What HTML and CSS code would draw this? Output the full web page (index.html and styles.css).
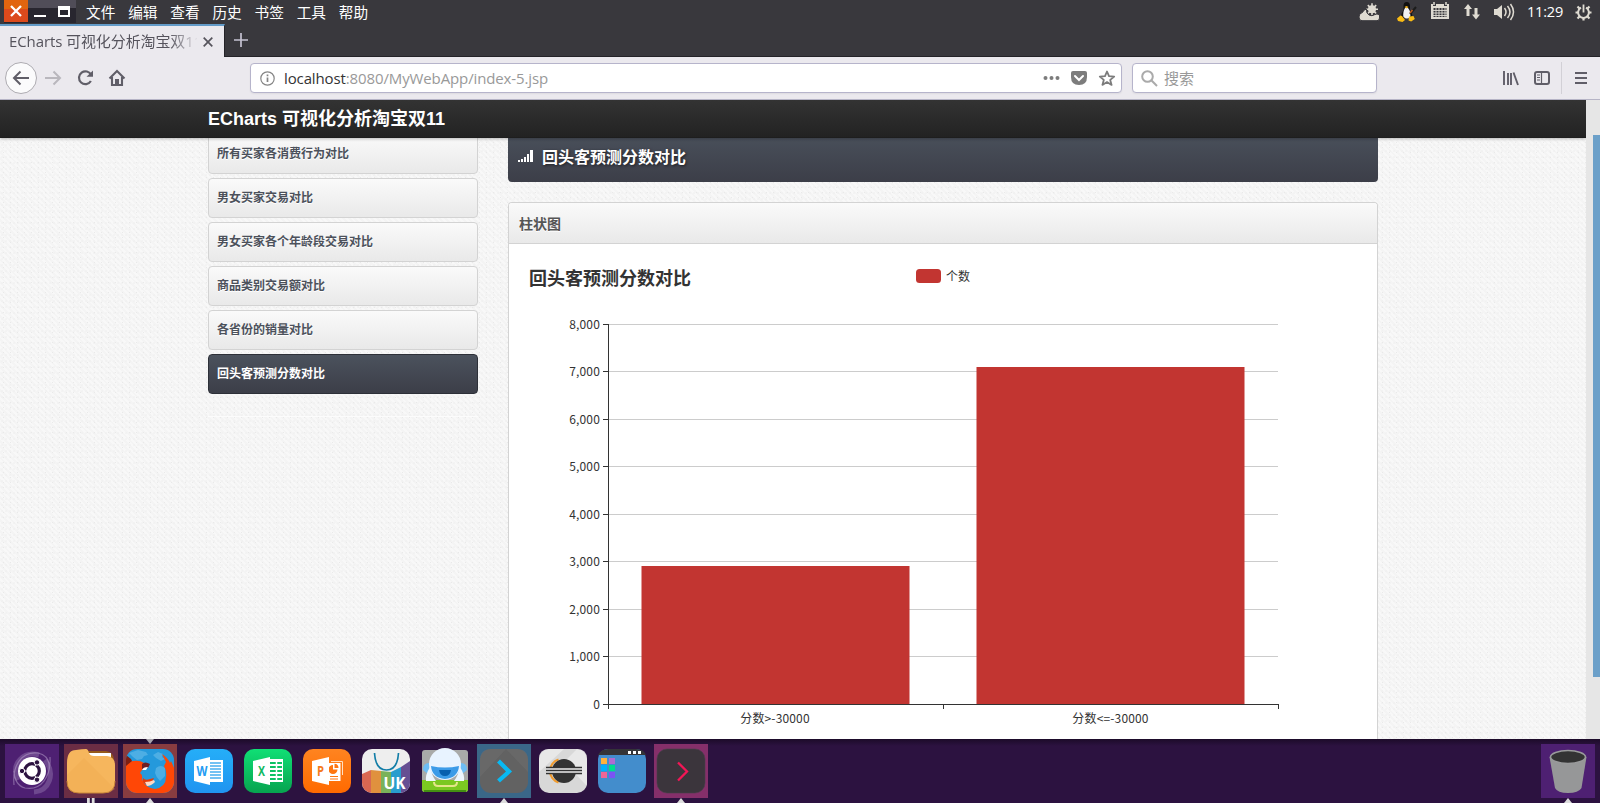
FILE: index.html
```html
<!DOCTYPE html>
<html lang="zh-CN">
<head>
<meta charset="utf-8">
<title>ECharts 可视化分析淘宝双11</title>
<link rel="stylesheet" href="styles.css">
</head>
<body>
<header class="menubar">
  <svg class="winbtns" width="72" height="23" viewBox="0 0 72 23"><rect width="72" height="23" fill="#28262f"/><path d="M24 0h48v8H24z" fill="#504d58"/><path d="M0 0h24v22H0z" fill="#dc4a1c"/><path d="M0 0h24v9H0z" fill="#e1650f"/><path d="M7 6l10 10M17 6L7 16" stroke="#fff" stroke-width="2.3"/><path d="M30 15h12v2H30z" fill="#fff"/><path d="M54 6h12v11H54zM56 10v5h8v-5z" fill="#fff" fill-rule="evenodd"/></svg>
  <nav class="menus"><span>文件</span><span>编辑</span><span>查看</span><span>历史</span><span>书签</span><span>工具</span><span>帮助</span></nav>
  <div class="tray">
    <svg class="t-weather" width="21" height="18" viewBox="0 0 21 18" fill="#dfdbd2"><circle cx="13" cy="6.300" r="4"/><path d="M13 .3v12M7 6.300h12M8.800 2.100l8.400 8.400M17.200 2.100l-8.400 8.400" stroke="#dfdbd2" stroke-width="1.600"/><path d="M0 14q0-4 3.500-4.500 1-3 4-3.500-.4 4.500 2.500 6 3 1.500 5.500-.3 2.500-1.700 5 .3v3q0 2.700-2.500 2.700H3Q0 17.700 0 14z" stroke="#39383d" stroke-width="1"/></svg>
    <svg class="t-tux" width="20" height="20" viewBox="0 0 20 20"><path d="M4 16q0-5 2.500-8V4q0-4 3.200-4T13 4v4q3 4 2 8z" fill="#111"/><path d="M6.500 15Q5.500 10 8 6h3q3.500 4 2 9-3 3-6.500 0z" fill="#f2f2f2"/><path d="M7.500 5l2-1 2 1-2 1.600z" fill="#f3b21c"/><path d="M0 16.500l3.500-3 1.500.5 3 4-2.500 2L1 19zM11.500 18.500l.5-4 4.500-.5 1.300 3-3.600 2.500z" fill="#fbbc14"/><path d="M13 12l6-7" stroke="#1c1c1c" stroke-width="2"/><path d="M13 11l2.500-3" stroke="#c45c1c" stroke-width="1.500"/></svg>
    <svg class="t-cal" width="18" height="18" viewBox="0 0 18 18"><path d="M0 2h2v2h3V2h8v2h3V2h2v15H0z" fill="#dfdbd2"/><path d="M3 0v3M15 0v3" stroke="#dfdbd2" stroke-width="1.500"/><path d="M2.500 6h13v9h-13z" fill="#39383d"/><path d="M2 8.500h14M2 11h14M2 13.500h14M5 6v9M8 6v9M11 6v9M14 6v9" stroke="#dfdbd2" stroke-width=".9"/></svg>
    <svg class="t-net" width="16" height="16" viewBox="0 0 16 16" fill="#dfdbd2"><path d="M4 0l4 5H5.500v7h-3V5H0zM12 15.500l-4-5h2.500V4h3v6.500H16z"/></svg>
    <svg class="t-vol" width="21" height="18" viewBox="0 0 21 18" fill="none" stroke="#dfdbd2" stroke-width="1.500"><path d="M0 6h3l5-4v14l-5-4H0z" fill="#dfdbd2" stroke="none"/><path d="M10.500 5q3 4 0 8M13.500 3q5 6 0 12M16.500 1q6 8 0 16"/></svg>
    <span class="clock">11:29</span>
    <svg class="t-gear" width="17" height="17" viewBox="0 0 17 17" fill="none" stroke="#dfdbd2"><path d="M11 3.700a5.400 5.400 0 1 1-5 0" stroke-width="2"/><path d="M8.500 .5v8" stroke-width="1.800"/><path d="M2.500 2.500l2 2M14.500 2.500l-2 2M.5 8.500h3M13.500 8.500h3M2.500 14.500l2-2M14.500 14.500l-2-2M8.500 13.500v3" stroke-width="2.200"/></svg>
  </div>
</header>
<div class="tabstrip">
  <div class="tab"><span class="tab-title">ECharts 可视化分析淘宝双11</span><svg width="10" height="10" viewBox="0 0 10 10"><path d="M.7.7l8.600 8.600M9.300.7L.7 9.300" stroke="#56545c" stroke-width="1.700"/></svg></div>
  <svg class="newtab" width="14" height="14" viewBox="0 0 14 14"><path d="M7 0v14M0 7h14" stroke="#c5c2d2" stroke-width="1.700"/></svg>
</div>
<div class="toolbar">
  <svg class="nav" width="130" height="42" viewBox="0 0 130 42" fill="none" stroke="#605e68" stroke-width="2"><circle cx="21" cy="21" r="15.500" fill="#fbfbfc" stroke="#adabb1" stroke-width="1"/><path d="M29 21H14M20.500 14.500L14 21l6.500 6.500"/><path d="M45 21h15M53.500 14.500L60 21l-6.500 6.500" stroke="#b9b7bd"/><path d="M91.200 18a6.400 6.400 0 1 0-.3 6" stroke-width="2.200"/><path d="M93 13.500v6.200h-6.500z" fill="#605e68" stroke="none"/><path d="M109.500 21.500L117 14l7.500 7.500M112 20v8h10v-8" stroke-width="2.100"/><path d="M115 22h4v6h-4z" fill="#605e68" stroke="none"/></svg>
  <div class="urlbox">
    <svg width="15" height="15" viewBox="0 0 15 15" fill="none" stroke="#858585"><circle cx="7.500" cy="7.500" r="6.700" stroke-width="1.200"/><path d="M7.500 6.500V11M7.500 3.500v1.700" stroke-width="1.700"/></svg>
    <span class="url">localhost<span class="dim">:8080/MyWebApp/index-5.jsp</span></span>
    <svg class="urlacts" width="74" height="18" viewBox="0 0 74 18" fill="#7c7c7c"><circle cx="2.500" cy="9" r="2"/><circle cx="8.500" cy="9" r="2"/><circle cx="14.500" cy="9" r="2"/><path d="M30 2h12q2 0 2 2v4q0 8-8 8t-8-8V4q0-2 2-2z"/><path d="M32 7l4 4 4-4" fill="none" stroke="#fff" stroke-width="2" stroke-linecap="round"/><path d="M64 2.500l2 4.700 5.200.4-4 3.300 1.400 5-4.600-2.800-4.600 2.800 1.400-5-4-3.300 5.200-.4z" fill="none" stroke="#7c7c7c" stroke-width="1.800" stroke-linejoin="round"/></svg>
  </div>
  <div class="searchbox">
    <svg width="17" height="17" viewBox="0 0 17 17" fill="none" stroke="#aaa" stroke-width="2"><circle cx="6.500" cy="6.500" r="5.300"/><path d="M10.300 10.300l5.700 5.700"/></svg>
    <span class="hint">搜索</span>
  </div>
  <svg class="rtools" width="98" height="42" viewBox="0 0 98 42" fill="none" stroke="#605e68" stroke-width="2"><path d="M4 14v14M8 16v12M11 16v12M13.500 15.500L18 28" stroke-width="1.900"/><rect x="35" y="15" width="14" height="12" rx="2"/><path d="M41.500 15v12" stroke-width="1.200"/><path d="M37 18h3M37 20.500h3M37 23h3" stroke-width="1"/><path d="M61.500 5v32" stroke="#d2d0d6" stroke-width="1"/><path d="M75 16h12M75 21h12M75 26h12"/></svg>
</div>
<main class="viewport">
  <div class="page">
    <div class="navbar"><span class="brand">ECharts 可视化分析淘宝双11</span></div>
    <div class="container">
      <aside class="sidebar">
        <ul class="mainnav">
          <li>所有买家各消费行为对比</li>
          <li>男女买家交易对比</li>
          <li>男女买家各个年龄段交易对比</li>
          <li>商品类别交易额对比</li>
          <li>各省份的销量对比</li>
          <li class="active">回头客预测分数对比</li>
        </ul>
        <div class="rule"></div>
      </aside>
      <section class="content">
        <h1 class="page-title"><svg width="15" height="13" viewBox="0 0 15 13" fill="#fff"><path d="M0 10h2v2H0zM3 9h2v3H3zM6 7h2v5H6zM9 4h2v8H9zM12 0h3v12h-3z"/></svg>回头客预测分数对比</h1>
        <div class="widget">
          <h3>柱状图</h3>
          <svg class="chart" width="868" height="495" viewBox="509 244 868 495">
            <text x="529" y="285" class="c-title">回头客预测分数对比</text>
            <rect x="916" y="269" width="25" height="14" rx="3.500" fill="#c23531"/>
            <text x="946" y="281">个数</text>
            <path d="M609 324.500h669M609 371.500h669M609 419.500h669M609 466.500h669M609 514.500h669M609 561.500h669M609 609.500h669M609 656.500h669" stroke="#ccc"/>
            <path d="M641.500 566h268v138h-268zM976.500 367h268v337h-268z" fill="#c23531"/>
            <path d="M608.500 324v385M603 704.500h676M943.500 704v5M1278.500 704v5M603 324.500h5M603 371.500h5M603 419.500h5M603 466.500h5M603 514.500h5M603 561.500h5M603 609.500h5M603 656.500h5" stroke="#333"/>
            <g text-anchor="end" class="num"><text x="600" y="329">8,000</text><text x="600" y="376">7,000</text><text x="600" y="424">6,000</text><text x="600" y="471">5,000</text><text x="600" y="519">4,000</text><text x="600" y="566">3,000</text><text x="600" y="614">2,000</text><text x="600" y="661">1,000</text><text x="600" y="709">0</text></g>
            <g text-anchor="middle" class="num"><text x="775" y="723">分数&gt;-30000</text><text x="1110.500" y="723">分数&lt;=-30000</text></g>
          </svg>
        </div>
      </section>
    </div>
  </div>
  <div class="scrollbar"><div class="thumb"></div></div>
</main>
<footer class="dock">
  <div class="cell c-dash"><svg viewBox="0 0 54 54"><g fill="none" stroke="#bba5d0"><path d="M13 36C5 19 19 7 34 11M40 16c11 14 4 31-11 32" stroke-width="5" opacity=".3"/><path d="M9 41C7 20 18 7 33 9c9 2 12 9 11 17M45 13c1 20-9 34-25 31-8-2-11-10-11-17" stroke-width="1.200" opacity=".5"/></g><circle cx="27" cy="27" r="14" fill="#fff"/><circle cx="27" cy="27" r="7.300" fill="none" stroke="#2c1240" stroke-width="3.200"/><path d="M27 27L16 27M27 27l6-10M27 27l6 10" stroke="#fff" stroke-width="1"/><g fill="#2c1240" stroke="#fff"><circle cx="17" cy="27" r="2.700"/><circle cx="32" cy="18.400" r="2.700"/><circle cx="32" cy="35.700" r="2.700"/></g></svg></div>
  <div class="cell c-files"><svg viewBox="0 0 54 54"><path d="M22 7h20q8 1 8 10H22z" fill="#96591a"/><path d="M24 9h23v5H24z" fill="#fff"/><path d="M3 19Q3 6 12 6q6-1 10-1 2 0 3 4 1 3 5 3h13q8 1 8 9v16q0 12-12 12H15Q3 49 3 37z" fill="#f6b65d"/><path d="M3 31L20 14l31 31-6 4H15Q3 49 3 37z" fill="#efa94d" opacity=".35"/><path d="M3 37q0 12 12 12h24q12 0 12-12" fill="none" stroke="#c98639"/></svg><i class="pip two"></i></div>
  <div class="cell c-fox"><i class="tip"></i><svg viewBox="0 0 54 54"><defs><clipPath id="fx"><rect x="3" y="5" width="48" height="44" rx="11"/></clipPath></defs><g clip-path="url(#fx)"><path d="M0 0h54v54H0z" fill="#2499dc"/><path d="M6 9l9-3 8 2 2 3-4 1-2 3-5 1-4-3zM30 11l5-3 5 2-1 3 3 2-4 2-5-3zM33 24q5-4 9 0v8l-5 5q-4-4-5-8z" fill="#6fbfeb" opacity=".55"/><path d="M0 22Q4 17 10 17q7-1 11 2l-2 7-2 3q3 2 2 6 3 9 13 10 11-2 11-12 1-6-2-11l2-4-4-8q6 4 8 9l1-2 4 9v28H0z" fill="#ff4706"/><path d="M3 11l5 4 1 2-6 5z" fill="#7c1f13"/><path d="M19 20q3-3 8 0l-2 4-6 2z" fill="#6e1f23"/><path d="M19 26q1-3 6-3l-2 3z" fill="#fff"/><path d="M20 34q2 3 7 1l4-1-3 6q-5 2-8-2z" fill="#e83a06"/><path d="M22 38q5 0 9-2l1 2q-4 4-8 4z" fill="#ffd9c4"/></g></svg><i class="pip"></i></div>
  <div class="cell"><svg viewBox="0 0 54 54"><defs><linearGradient id="gw" x2="0" y2="1"><stop stop-color="#25aef8"/><stop offset="1" stop-color="#2094f0"/></linearGradient></defs><rect x="3" y="5" width="48" height="44" rx="10" fill="url(#gw)"/><path d="M28 16h13v22H28z" fill="#fff"/><path d="M28 19h11M28 22h11M28 25h11M28 28h11M28 31h11M28 34h11" stroke="#46aef0" stroke-width="1.300"/><path d="M12 17l16-4v28l-16-4z" fill="#fff"/><text x="20" y="32" class="g" textLength="11" lengthAdjust="spacingAndGlyphs" fill="#229cf3">W</text></svg></div>
  <div class="cell"><svg viewBox="0 0 54 54"><defs><linearGradient id="ge" x2="0" y2="1"><stop stop-color="#10df75"/><stop offset="1" stop-color="#07a34f"/></linearGradient></defs><rect x="3" y="5" width="48" height="44" rx="10" fill="url(#ge)"/><path d="M28 15h14v23H28z" fill="#fff"/><path d="M28 19h13M28 23h13M28 27h13M28 31h13M28 35h13" stroke="#0bc263" stroke-width="2"/><path d="M35.500 16v21" stroke="#fff" stroke-width="1.500"/><path d="M12 17l17-4v28l-17-4z" fill="#fff"/><text x="20.500" y="32" class="g" textLength="7" lengthAdjust="spacingAndGlyphs" fill="#10b960">X</text></svg></div>
  <div class="cell"><svg viewBox="0 0 54 54"><defs><linearGradient id="gp" x2="0" y2="1"><stop stop-color="#ff8420"/><stop offset="1" stop-color="#ff6a00"/></linearGradient></defs><rect x="3" y="5" width="48" height="44" rx="10" fill="url(#gp)"/><path d="M31 17.500h11.500V31" fill="none" stroke="#ffe0c5"/><path d="M28 19h12.500v18H28z" fill="#fff"/><path d="M33 21a4.500 4.500 0 1 0 4.500 4.500H33z" fill="#ff7610"/><path d="M34.500 19.800v4.200h4a4.200 4.200 0 0 0-4-4.200z" fill="#ff7610"/><path d="M30 32.500h8M30 35h8" stroke="#ff7610"/><path d="M12 17l17-4v28l-17-4z" fill="#fff"/><text x="20.500" y="32" class="g" textLength="7" lengthAdjust="spacingAndGlyphs" fill="#f57a1c">P</text></svg></div>
  <div class="cell"><svg viewBox="0 0 54 54"><defs><clipPath id="uk"><rect x="3" y="5" width="48" height="44" rx="10"/></clipPath></defs><g clip-path="url(#uk)"><path d="M0 0h54v54H0z" fill="#eee"/><path d="M3 30l9-4v24H3z" fill="#d96752"/><path d="M12 26l10 1v23H12z" fill="#e0913e"/><path d="M22 27l10 1v22H22z" fill="#79b25a"/><path d="M32 28l10-5v27H32z" fill="#289dcd"/><path d="M42 23l9-6v33h-9z" fill="#664f93"/></g><path d="M15.500 9q1 17 12 17t12-17" fill="none" stroke="#127da7" stroke-width="1.700"/><text x="35.500" y="45" class="uk">UK</text></svg></div>
  <div class="cell"><svg viewBox="0 0 54 54"><rect x="4" y="6" width="46" height="42" rx="3" fill="#a9aaa9"/><path d="M4 36h46v9q0 3-3 3H7q-3 0-3-3z" fill="#7bc821"/><path d="M6 46h42v2H6z" fill="#439012"/><path d="M5 26q0-7 6-7h32q6 0 6 7l-5 4H10z" fill="#6dbdf5"/><circle cx="27" cy="20" r="16" fill="#e8f3ff"/><path d="M13 22q14 3 28 0-1 12-14 13-13-1-14-13z" fill="#3c9be8"/><path d="M21 26h12q-1 6-6 6t-6-6z" fill="#075fae"/><path d="M12 23q-5 8-4 14h10q-4-5-6-14zM42 23q5 8 4 14H36q4-5 6-14z" fill="#eef6ff"/><path d="M16 38q0 4 4 4h15q4 0 4-4" fill="none" stroke="#e5e58a" stroke-width="2"/></svg></div>
  <div class="cell c-teal"><svg viewBox="0 0 54 54"><rect x="3" y="5" width="48" height="44" rx="11" fill="#626262"/><path d="M3 33L29 5h-15Q3 5 3 16zM29 5l22 23V16Q51 5 40 5z" fill="#737373" opacity=".4"/><path d="M21.500 17L32 27.500 21.500 37" fill="none" stroke="#08b9f3" stroke-width="4.200"/></svg><i class="pip"></i></div>
  <div class="cell"><svg viewBox="0 0 54 54"><rect x="3" y="5" width="48" height="44" rx="10" fill="#d8d8d8"/><path d="M3 28V15Q3 5 13 5h15zM51 42L28 18 41 5q10 0 10 10z" fill="#eee" opacity=".75"/><path d="M22.500 15.500a12 12 0 0 0 0 23" fill="none" stroke="#f19b2c" stroke-width="2"/><circle cx="28" cy="27" r="12" fill="#333"/><path d="M10 23h36v7H10z" fill="#eee"/><path d="M10 23.500h36M10 26.500h36M10 29.500h36" stroke="#333" stroke-width="1.300"/></svg></div>
  <div class="cell"><svg viewBox="0 0 54 54"><rect x="3" y="5" width="48" height="44" rx="10" fill="#438dcc"/><path d="M3 11q3-6 10-6h28q8 0 10 6z" fill="#343437"/><path d="M33 7h3v3h-3zM38 7h3v3h-3zM43 7h3v3h-3z" fill="#fff"/><path d="M6 14h6v6H6z" fill="#ffb23e"/><path d="M14 14h6v6h-6z" fill="#b06bd1"/><path d="M6 21h6v6H6z" fill="#00b0ff"/><path d="M14 21h6v6h-6z" fill="#00df8c"/><path d="M6 28h6v6H6z" fill="#f06596"/><path d="M14 28h6v6h-6z" fill="#7b54f4"/></svg></div>
  <div class="cell c-pink"><svg viewBox="0 0 54 54"><rect x="3" y="5" width="48" height="44" rx="10" fill="#3b353c" stroke="#48404b" stroke-width=".6"/><path d="M24 18.500l9 9-9 9" fill="none" stroke="#f31656" stroke-width="2.300"/></svg><i class="pip"></i></div>
  <div class="cell c-trash"><svg viewBox="0 0 54 54"><path d="M8.500 13h37L40.500 44q-3 5-13.500 5t-13-5z" fill="#969798"/><ellipse cx="27" cy="13" rx="17.500" ry="6.500" fill="#333" stroke="#999a9b" stroke-width="1.600"/></svg><i class="pip"></i></div>
</footer>
</body>
</html>
```
FILE: styles.css
```css
* { box-sizing: border-box; }
body { margin: 0; width: 1600px; height: 803px; overflow: hidden; display: flex; flex-direction: column; font-family: "Open Sans", "Noto Sans CJK SC", sans-serif; background: #39383d; }
svg { display: block; flex: none; }
.menubar { height: 24px; display: flex; align-items: flex-start; padding-left: 4px; color: #fff; font-size: 14.67px; line-height: 24px; }
.menus { display: flex; gap: 12.8px; margin-left: 10px; }
.tray { margin-left: auto; display: flex; align-items: center; height: 24px; padding-right: 8px; }
.t-tux { margin-left: 17px; }
.t-cal { margin-left: 14px; margin-top: -2px; }
.t-net { margin-left: 15px; }
.t-vol { margin-left: 14px; }
.clock { width: 37px; margin-left: 12px; font-size: 14.5px; letter-spacing: -.2px; white-space: nowrap; }
.t-gear { margin-left: 11px; }
.tabstrip { height: 33px; display: flex; align-items: center; border-bottom: 1px solid #242328; }
.tab { width: 225px; height: 33px; margin-bottom: -1px; background: #ebe9ee; border-top: 2px solid #639bc8; border-right: 1px solid #242328; padding: 1px 0 0 9px; display: flex; align-items: center; position: relative; z-index: 1; }
.tab-title { width: 188px; margin: -3px 6px 0 0; overflow: hidden; white-space: nowrap; font-size: 15px; letter-spacing: -.1px; line-height: 24px; color: #55535c; -webkit-mask-image: linear-gradient(90deg, #000 160px, transparent 190px); mask-image: linear-gradient(90deg, #000 160px, transparent 190px); }
.newtab { margin-left: 9px; }
.toolbar { height: 43px; background: #ebe9ee; border-bottom: 1px solid #b6b4c6; display: flex; align-items: center; }
.urlbox, .searchbox { height: 30px; border: 1px solid #b6b4cb; border-radius: 4px; background: #fff; display: flex; align-items: center; font-size: 15px; box-shadow: 0 1px 2px rgba(0,0,0,.06); }
.urlbox { width: 872px; margin-left: 120px; padding: 0 4px 0 9px; }
.url { margin-left: 9px; color: #333; white-space: nowrap; letter-spacing: -.12px; }
.dim { color: #999; }
.urlacts { margin-left: auto; }
.searchbox { width: 245px; margin-left: 10px; padding-left: 8px; color: #999; gap: 6px; }
.hint { margin-top: -1px; }
.rtools { margin-left: 123px; }
.viewport { height: 639px; display: flex; overflow: hidden; }
.page { width: 1586px; height: 639px; overflow: hidden; background-color: #f5f5f5; background-image: radial-gradient(circle, #e9e9e9 .6px, transparent .9px), radial-gradient(circle, #f0f0f0 .6px, transparent .9px), repeating-linear-gradient(45deg, #f8f8f8 0 2px, #f4f4f4 2px 4px); background-size: 7px 5px, 4px 6px, auto; }
.navbar { height: 38px; background: linear-gradient(#333, #222); padding-left: 208px; position: relative; z-index: 2; box-shadow: 0 1px 3px rgba(0,0,0,.25), inset 0 -1px 0 rgba(0,0,0,.1); }
.brand { color: #fff; font: bold 18px/38px "Liberation Sans", "Noto Sans CJK SC", sans-serif; }
.container { width: 1170px; margin-left: 208px; display: flex; gap: 30px; font-family: "Noto Sans CJK SC", sans-serif; }
.sidebar { width: 270px; margin-top: -4px; }
.mainnav { list-style: none; margin: 0; padding: 0; display: flex; flex-direction: column; gap: 4px; }
.mainnav li { height: 40px; border: 1px solid #d3d3d3; border-radius: 4px; background: linear-gradient(#fafafa, #e9e9e9); color: #4c515b; font-size: 12px; font-weight: bold; line-height: 36px; padding-left: 8px; text-shadow: 0 1px 0 #fff; }
.mainnav .active { color: #fff; border-color: #2d3038; background: linear-gradient(#4b525d, #3c3e48); text-shadow: none; }
.rule { height: 1px; margin-top: 22px; background: #fcfcfc; }
.content { width: 870px; }
.page-title { height: 50px; margin: -6px 0 20px; padding: 0 0 2px 10px; border-radius: 4px; background: linear-gradient(#4a515c, #3c3e48); color: #fff; font-size: 16px; line-height: 48px; display: flex; align-items: center; gap: 9px; text-shadow: 1px 1px 3px rgba(0,0,0,.6); }
.widget { border: 1px solid #d3d3d3; border-bottom: 0; border-radius: 4px 4px 0 0; background: #fff; overflow: hidden; }
.widget h3 { margin: 0; height: 41px; padding-left: 10px; border-bottom: 1px solid #d3d3d3; background: linear-gradient(#fafafa, #e9e9e9); color: #555; font-size: 14px; line-height: 40px; text-shadow: 0 1px 0 #fff; }
.chart text { font-family: "Noto Sans CJK SC", sans-serif; font-size: 12px; fill: #333; }
.chart .num text { letter-spacing: .15px; }
.chart .c-title { font-size: 18px; font-weight: bold; }
.scrollbar { width: 14px; background: #e6e6e6; padding: 35px 0 0 7px; }
.thumb { height: 542px; background: #6ca0c9; }
.dock { height: 64px; background: linear-gradient(#1c0b29, #2c1240 7px); display: flex; gap: 5px; padding: 5px 5px 5px; }
.cell { width: 54px; height: 54px; position: relative; flex: none; }
.cell svg { width: 54px; height: 54px; }
.c-dash, .c-trash { background: #4e2072; }
.c-files { background: #6b2d44; }
.c-fox { background: #883c40; }
.c-teal { background: #3a6788; }
.c-pink { background: #852f6a; }
.c-trash { margin-left: auto; }
.g { font: bold 14px "Open Sans", sans-serif; text-anchor: middle; }
.uk { font: bold 15.5px "Open Sans", sans-serif; text-anchor: middle; fill: #fff; }
.pip { position: absolute; left: 23px; top: 54px; width: 8px; height: 5px; background: #ddd; clip-path: polygon(50% 0, 100% 100%, 0 100%); }
.pip.two { clip-path: polygon(0 0, 35% 0, 35% 100%, 0 100%, 0 0, 60% 0, 95% 0, 95% 100%, 60% 100%, 60% 0); }
.tip { position: absolute; left: 23px; top: -5px; width: 8px; height: 5px; background: #a9a5ad; clip-path: polygon(0 0, 100% 0, 50% 100%); }
```
